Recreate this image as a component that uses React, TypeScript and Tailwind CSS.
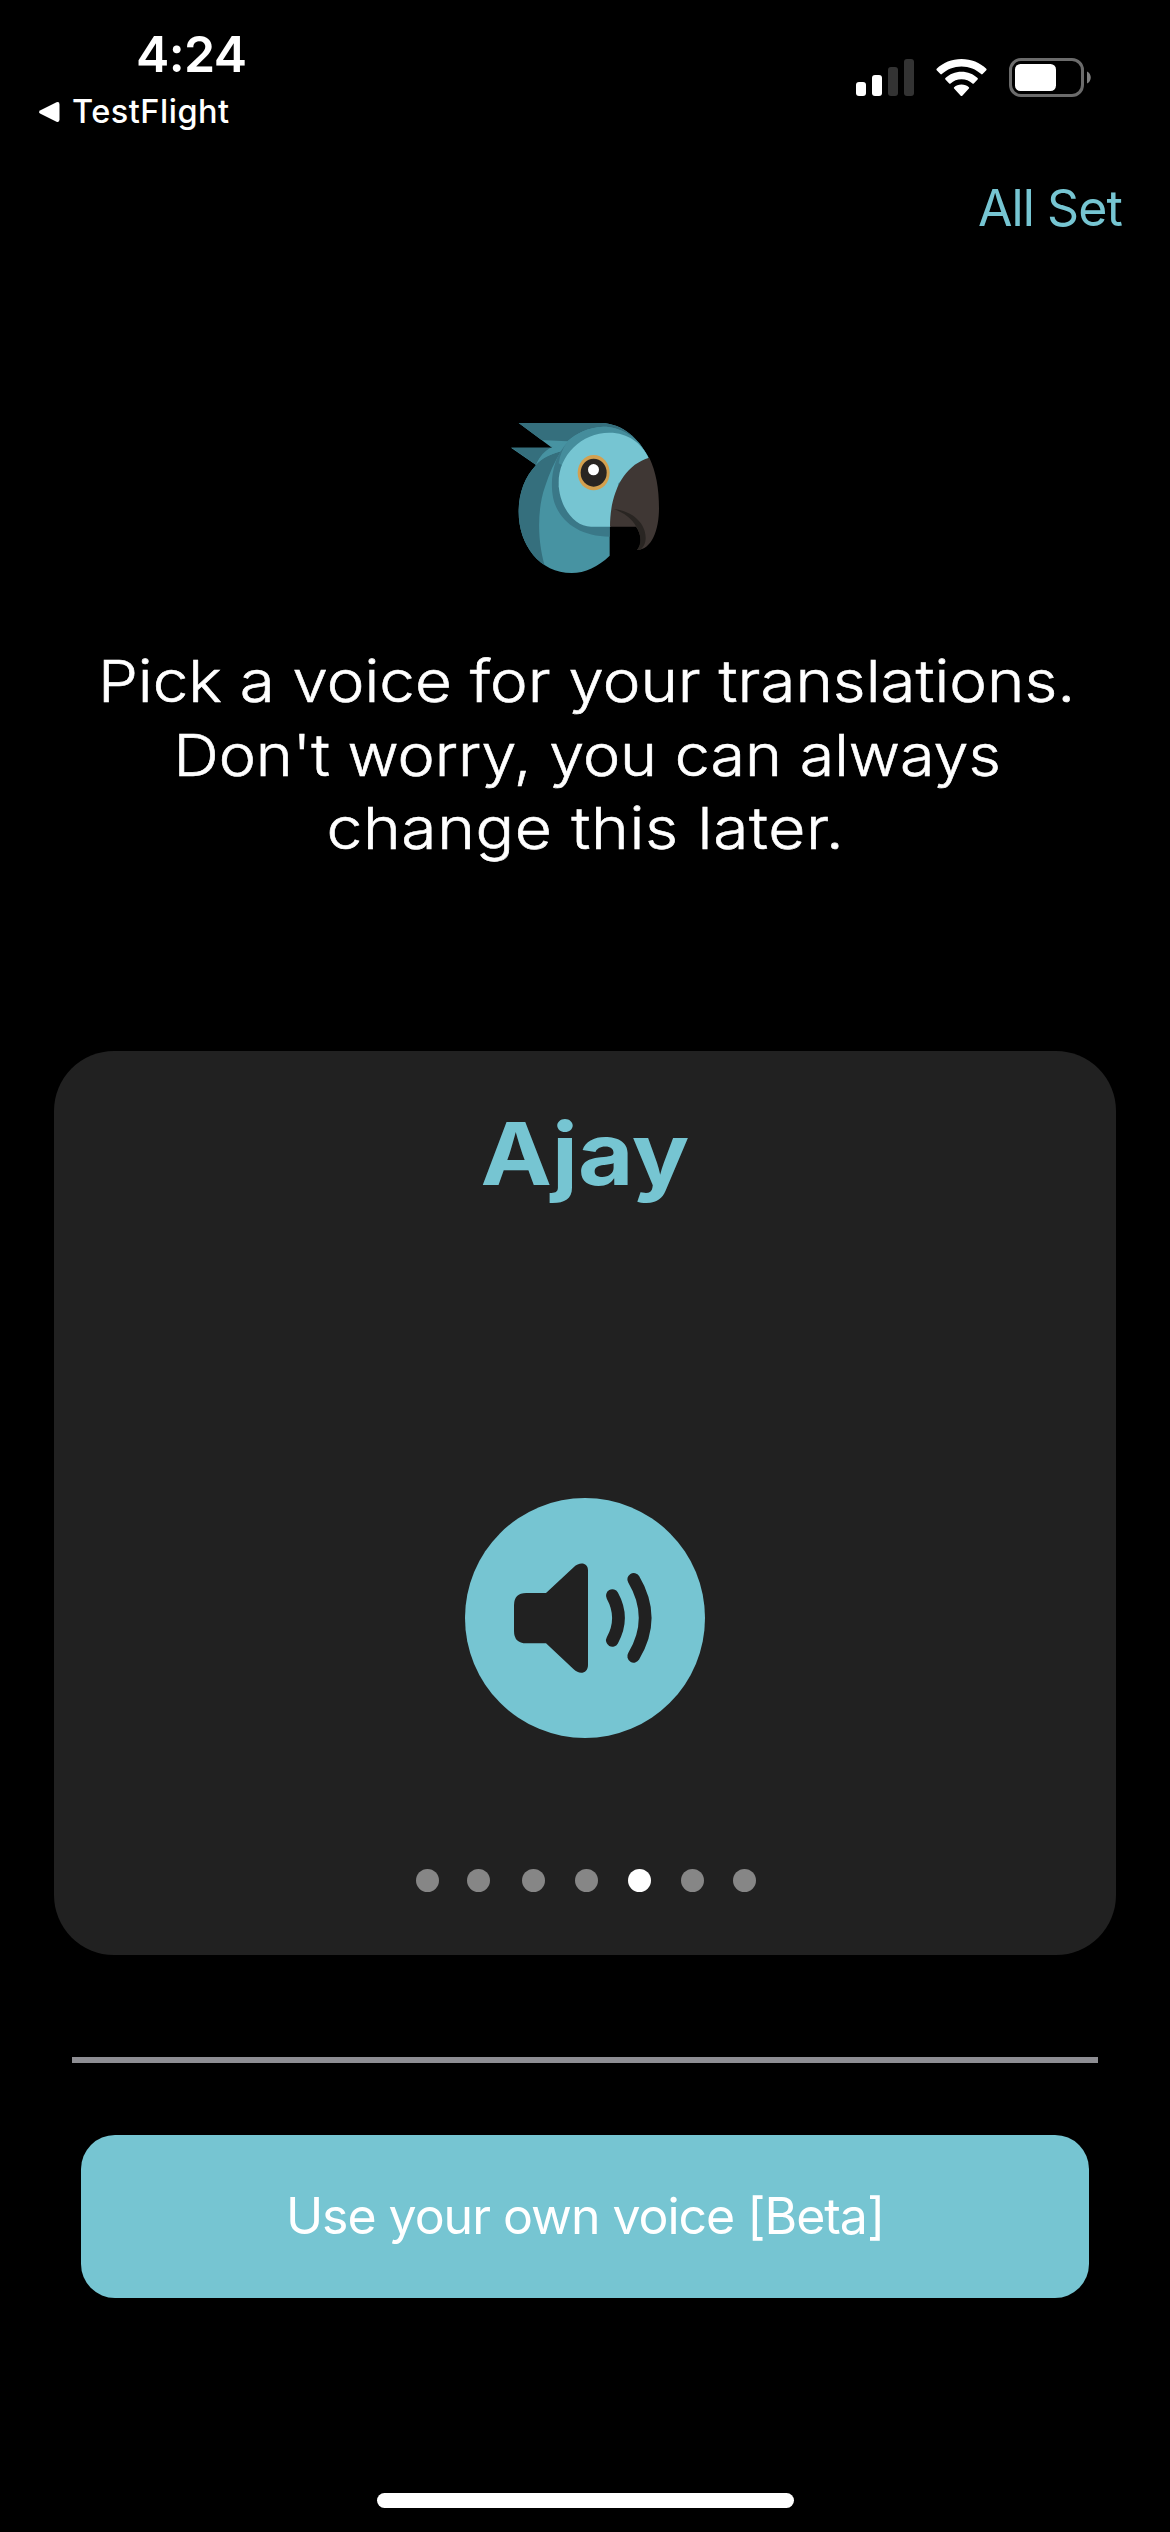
function StatusIcons() {
  return (
    <div className="flex items-center pt-[58px] h-[97px]">
      <svg className="w-[58px] h-[37px]" viewBox="0 0 58 37">
        <rect x="0" y="23" width="10" height="14" rx="3" fill="#fff" />
        <rect x="16" y="16" width="10" height="21" rx="3" fill="#fff" />
        <rect x="32" y="8" width="10" height="29" rx="3" fill="#333" />
        <rect x="48" y="0" width="10" height="37" rx="3" fill="#333" />
      </svg>
      <svg className="ml-[22px] w-[51px] h-[38px]" viewBox="0 0 51 38" fill="#fff">
        <path d="M25.5 0C35.200 0 44 3.700 50.300 9.700Q51 10.500 50.300 11.300L46.600 15.100Q45.900 15.700 45.200 15.100C40 10.300 33.100 7.500 25.500 7.500S11 10.300 5.800 15.100Q5.100 15.700 4.400 15.100L.7 11.300Q0 10.500 .7 9.700C7 3.700 15.800 0 25.500 0Z" />
        <path d="M25.500 12.800C31.800 12.800 37.400 15.200 41.600 19.100Q42.200 19.800 41.600 20.500L37.800 24.400Q37.100 25 36.400 24.400C33.500 21.800 29.700 20.200 25.500 20.200S17.500 21.800 14.600 24.400Q13.900 25 13.200 24.400L9.400 20.500Q8.800 19.800 9.400 19.100C13.600 15.200 19.200 12.800 25.500 12.800Z" />
        <path d="M25.500 25.500C28.400 25.500 31 26.500 32.900 28.200Q33.500 28.900 32.900 29.500L26.300 36.700Q25.500 37.500 24.700 36.700L18.100 29.500Q17.500 28.900 18.100 28.200C20 26.500 22.600 25.500 25.500 25.500Z" />
      </svg>
      <svg className="ml-[22px] w-[83px] h-[39px]" viewBox="0 0 83 39">
        <rect x="1.500" y="1.500" width="72" height="36" rx="10.500" fill="none" stroke="#6b6b6b" strokeWidth="3" />
        <rect x="6" y="6" width="41" height="27" rx="5.500" fill="#fff" />
        <path d="M78 13.500C83 15.500 83 23.500 78 25.500Z" fill="#808080" />
      </svg>
    </div>
  );
}

function StatusBar() {
  return (
    <header className="flex h-[178px] justify-between pr-[78px]">
      <div className="pt-[24px]">
        <div className="pl-[136px] text-[50px] leading-[60px] font-semibold tracking-[-0.6px]">4:24</div>
        <div className="mt-[8px] flex items-center pl-[38px]">
          <svg className="w-[22px] h-[22px]" viewBox="0 0 22 22">
            <path d="M2.500 9.200L18.500 1.300Q21.500 .3 21.500 3.500V18.500Q21.500 21.700 18.500 20.700L2.500 12.800Q-.5 11 2.500 9.200Z" fill="#fff" />
          </svg>
          <span className="ml-[12px] text-[32.5px] leading-[40px] font-medium tracking-[0.5px]">TestFlight</span>
        </div>
      </div>
      <StatusIcons />
    </header>
  );
}

function ParrotLogo() {
  return (
    <svg className="w-[190px] h-[190px]" viewBox="0 0 570 570">
      <defs>
        <clipPath id="head">
          <path d="M86 69H335C400 72 445 115 476 172L400 300L359 378V467C325 500 285 519 245 519C150 519 86 435 86 335C86 280 104 232 138 195L63 143H186Z" />
        </clipPath>
      </defs>
      <g clipPath="url(#head)">
        <rect x="60" y="60" width="460" height="470" fill="#4793a2" />
        <path d="M60 60H420L480 190C450 110 390 80 340 80C295 82 258 100 232 124L150 120Z" fill="#356f7d" />
        <path d="M60 140H188C163 152 149 168 138 195Z" fill="#356f7d" />
        <path d="M213 154C170 165 145 182 130 205L70 250V530H175C140 440 140 330 165 260C178 220 194 185 213 154Z" fill="#356f7d" />
        <path d="M138 195C150 170 165 153 190 147L230 124L213 154C180 163 155 175 138 195Z" fill="#4793a2" />
        <path d="M234 126C190 170 178 240 190 296C205 360 265 410 360 410V360H260L205 260L225 180Z" fill="#3a7888" />
        <path d="M340 80C295 82 258 100 232 126C218 145 210 165 206 190L240 210L300 130L358 110L474 172C450 110 390 80 340 80Z" fill="#458d9c" />
      </g>
      <path d="M476 174C455 130 415 98 358 98C275 98 206 165 206 248C206 315 250 380 303 380H362L385 250Z" fill="#76c5d2" />
      <path d="M478 173C498 215 507 265 507 325C507 390 485 450 441 450C456 435 456 405 438 380H360C360 280 400 195 478 173Z" fill="#3f3734" />
      <path d="M371 327C430 333 467 372 467 413C467 430 460 442 450 450H441C456 430 454 405 439 380C426 356 402 338 371 327Z" fill="#292522" />
      <ellipse cx="311" cy="218" rx="48" ry="53" fill="#d3a04f" />
      <ellipse cx="311" cy="218" rx="39" ry="42" fill="#292522" />
      <ellipse cx="310.500" cy="209" rx="16.500" ry="17" fill="#fff" />
    </svg>
  );
}

function SpeakerButton() {
  return (
    <button className="flex size-[240px] items-center justify-center rounded-full bg-[#76c5d2]">
      <svg className="size-[240px]" viewBox="0 0 720 720" fill="#212121">
        <path d="M184 285H243L326 208C344 190 369 194 369 217V501C369 526 344 532 326 514L243 436H184Q147 436 147 399V322Q147 285 184 285Z" />
        <path d="M442 293Q479 360 442 427M506 244Q575 360 506 475" fill="none" stroke="#212121" strokeWidth="38" strokeLinecap="round" />
      </svg>
    </button>
  );
}

const dots = [
  'ml-0 bg-[#868686]',
  'ml-[28px] bg-[#868686]',
  'ml-[32px] bg-[#868686]',
  'ml-[30px] bg-[#868686]',
  'ml-[30px] bg-white',
  'ml-[30px] bg-[#868686]',
  'ml-[29px] bg-[#868686]',
];

export default function App() {
  return (
    <div className="flex h-[2532px] w-[1170px] flex-col bg-black font-['Inter',sans-serif] text-white">
      <StatusBar />
      <div className="flex justify-end pr-[48px]">
        <button className="text-[50px] leading-[60px] tracking-[-0.9px] text-[#76c5d2]">All Set</button>
      </div>
      <div className="mt-[162px] flex justify-center">
        <ParrotLogo />
      </div>
      <h1 className="mt-[55px] flex flex-col items-center text-[58px] leading-[73.5px] font-light whitespace-nowrap [-webkit-text-stroke:0.6px_white]">
        <span className="scale-x-[1.097] pl-[2px]">Pick a voice for your translations.</span>
        <span className="scale-x-[1.083] pl-[4px]">Don't worry, you can always</span>
        <span className="scale-x-[1.105] tracking-[0.6px]">change this later.</span>
      </h1>
      <section className="mx-[54px] mt-[185.5px] flex h-[904px] flex-col items-center rounded-[60px] bg-[#212121] pt-[53px]">
        <h2 className="scale-x-[1.1] text-[87px] leading-[100px] font-bold text-[#76c5d2]">Ajay</h2>
        <div className="mt-[294px]">
          <SpeakerButton />
        </div>
        <div className="mt-[131px] flex pl-[2px]">
          {dots.map((dot, i) => (
            <span key={i} className={`size-[23px] rounded-full ${dot}`} />
          ))}
        </div>
      </section>
      <div className="mx-[72px] mt-[102px] h-[6px] bg-[#8e8e93]" />
      <button className="mx-[81px] mt-[72px] h-[163px] rounded-[34px] bg-[#76c5d2] text-[50px] tracking-[-1.03px]">
        Use your own voice [Beta]
      </button>
      <div className="mx-auto mt-[195px] h-[15px] w-[417px] rounded-full bg-white" />
    </div>
  );
}
